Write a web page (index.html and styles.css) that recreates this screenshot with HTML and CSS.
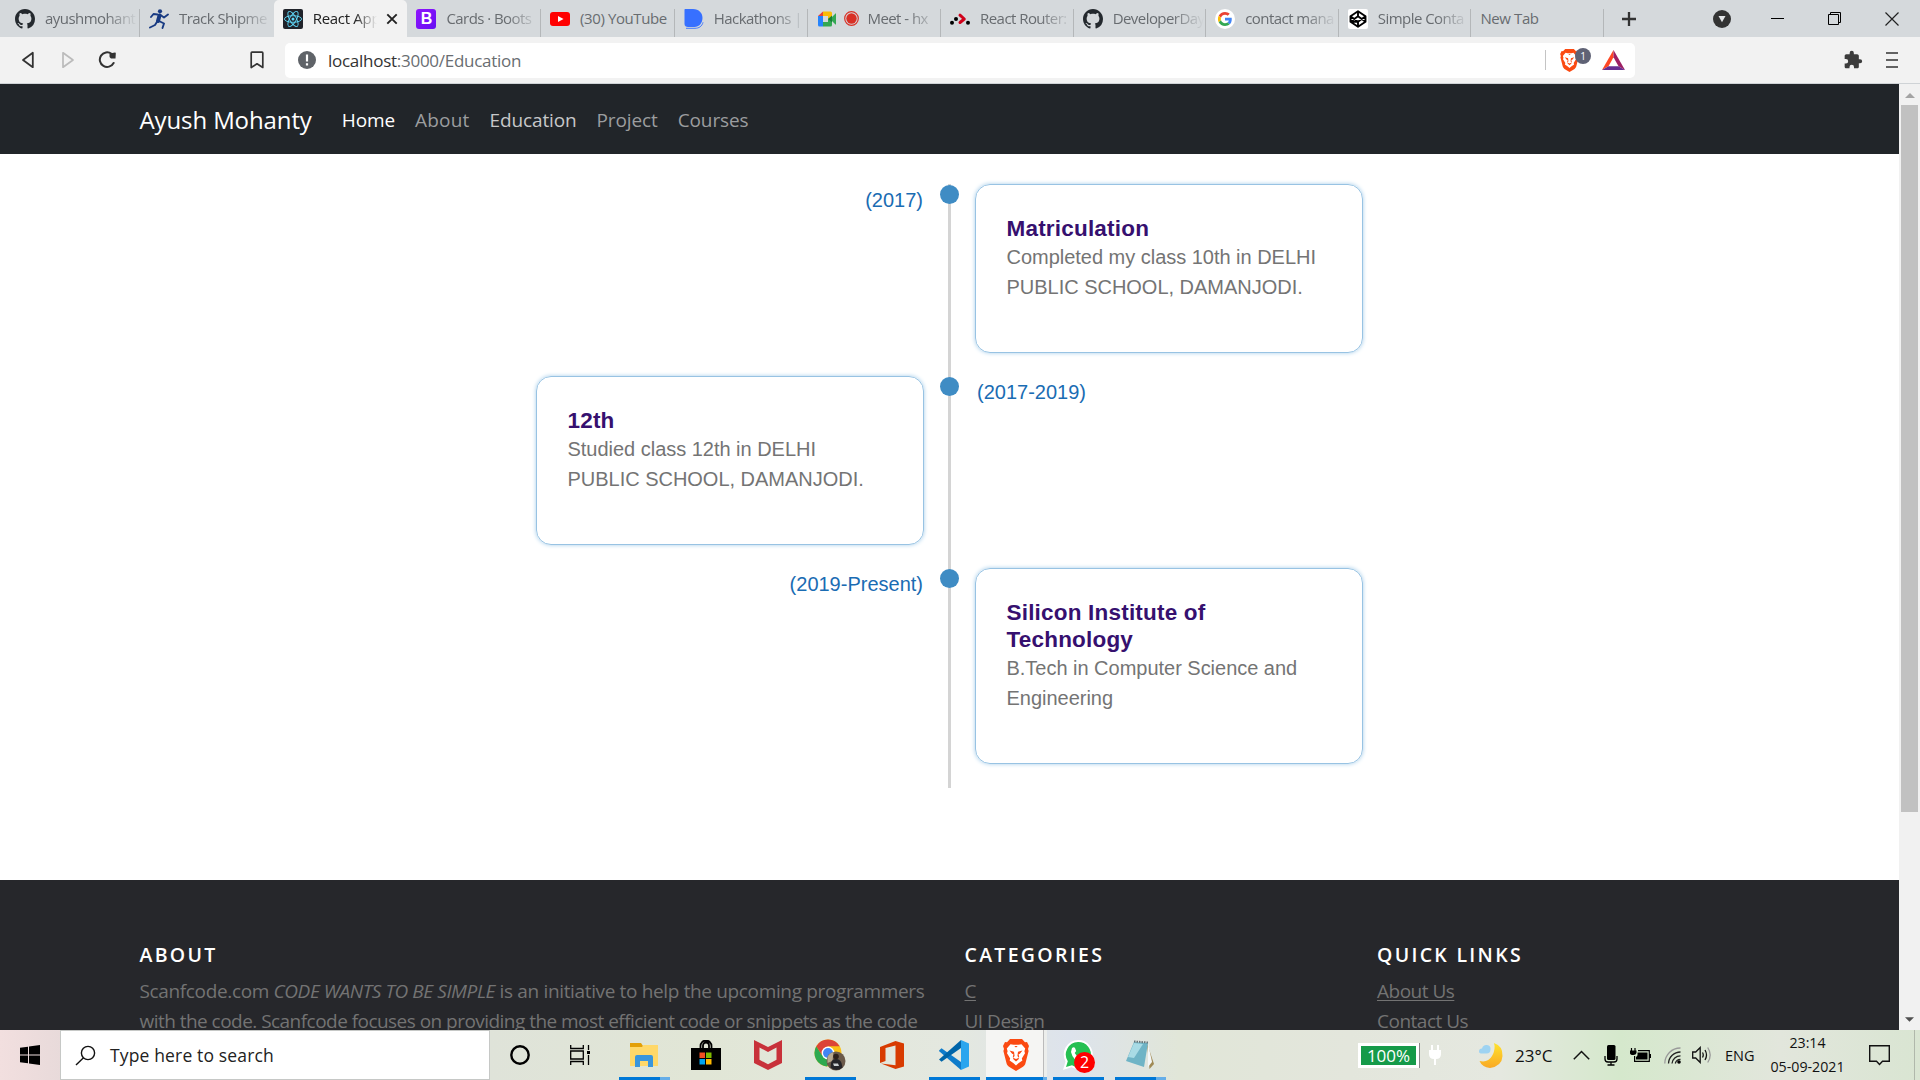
FILE: index.html
```html
<!DOCTYPE html>
<html lang="en">
<head>
<meta charset="utf-8">
<title>React App</title>
<link rel="stylesheet" href="styles.css">
</head>
<body>
<svg class="defs" width="0" height="0" aria-hidden="true">
  <symbol id="github" viewBox="0 0 16 16"><path fill="#24292e" d="M8 0C3.58 0 0 3.58 0 8c0 3.54 2.29 6.53 5.47 7.59.4.07.55-.17.55-.38 0-.19-.01-.82-.01-1.49-2.01.37-2.53-.49-2.69-.94-.09-.23-.48-.94-.82-1.13-.28-.15-.68-.52-.01-.53.63-.01 1.08.58 1.23.82.72 1.21 1.87.87 2.33.66.07-.52.28-.87.51-1.07-1.78-.2-3.64-.89-3.64-3.95 0-.87.31-1.59.82-2.15-.08-.2-.36-1.02.08-2.12 0 0 .67-.21 2.2.82.64-.18 1.32-.27 2-.27s1.36.09 2 .27c1.53-1.04 2.2-.82 2.2-.82.44 1.1.16 1.92.08 2.12.51.56.82 1.27.82 2.15 0 3.07-1.87 3.75-3.65 3.95.29.25.54.73.54 1.48 0 1.07-.01 1.93-.01 2.2 0 .21.15.46.55.38A8.01 8.01 0 0 0 16 8c0-4.42-3.58-8-8-8z"/></symbol>
  <symbol id="brave" viewBox="0 0 26 32"><path fill="#fb4a12" d="M7 0h12l3 3.200 2-.3 2 4-1 3 .6 2-3.200 12.600c-.4 1.500-1.200 2.400-2.400 3.200L13 32l-7-4.300c-1.200-.8-2-1.700-2.400-3.200L.4 11.900 1 9.900l-1-3 2-4 2 .3z"/><path fill="#fff" d="M7.500 5.200l3 .6h5l3-.6 3.700 4.400-.8 2.600.6 2-3.200 5.200.6 2-4 2.800L13 26.600l-2.400-2.400-4-2.800.6-2L4 14.200l.6-2-.8-2.600z"/><path fill="#fb4a12" d="M6.500 11.500l4.500 1.300.6 4.200-1.500 1.800L13 20l2.900-1.200-1.500-1.800.6-4.200 4.500-1.300-2.600 3.300-1.300.4.600 2.800-.6 2.200L13 22.500 10.400 20.200l-.6-2.200.6-2.800-1.300-.4zM11.300 7h3.400L13 8.500z"/></symbol>
</svg>

<header class="browser">
  <div class="tabs">
    <div class="tab"><svg class="fav"><use href="#github"/></svg><span class="name">ayushmohant</span></div>
    <div class="tab"><svg class="fav" viewBox="0 0 20 20"><circle cx="11" cy="2.300" r="2.100" fill="#183a82"/><path fill="none" stroke="#183a82" stroke-linecap="round" stroke-linejoin="round" d="M10.500 6.500L9 12" stroke-width="4"/><path fill="none" stroke="#183a82" stroke-width="1.900" stroke-linecap="round" stroke-linejoin="round" d="M8.500 5.500L4.500 5 2 8M11.500 6l3.500 2.500L19 5.500M10 12l5 2.500-1.500 4.500M8.500 12l-2.500 4L1 18.500"/></svg><span class="name">Track Shipme</span></div>
    <div class="tab active"><svg class="fav" viewBox="0 0 20 20"><rect width="20" height="20" rx="2" fill="#20232a"/><g fill="none" stroke="#61dafb" stroke-width=".9"><ellipse cx="10" cy="10" rx="8.600" ry="3.300"/><ellipse cx="10" cy="10" rx="8.600" ry="3.300" transform="rotate(60 10 10)"/><ellipse cx="10" cy="10" rx="8.600" ry="3.300" transform="rotate(120 10 10)"/></g><circle cx="10" cy="10" r="1.500" fill="#61dafb"/></svg><span class="name">React App</span><svg class="x" viewBox="0 0 12 12"><path d="M1.300 1.300l9.400 9.400M10.700 1.300L1.300 10.700" stroke="#222" stroke-width="1.900"/></svg></div>
    <div class="tab"><span class="fav boots">B</span><span class="name">Cards · Boots</span></div>
    <div class="tab full"><svg class="fav" viewBox="0 0 20 20"><rect y="3" width="20" height="14" rx="3" fill="#f00"/><path fill="#fff" d="M8 7l5.500 3L8 13z"/></svg><span class="name">(30) YouTube</span></div>
    <div class="tab"><svg class="fav" viewBox="0 0 20 20"><path fill="#3770ff" d="M1 0h8c6 0 9.500 4 9.500 9s-3.500 9-8 9H4c-2 0-3.500-1-3.500-3V.5z"/><path fill="none" stroke="#3770ff" stroke-width=".9" d="M2 19.300h9c4 0 7-2 8-6"/></svg><span class="name">Hackathons |</span></div>
    <div class="tab"><svg class="fav" viewBox="0 0 20 20"><path fill="#ea4335" d="M1 7l5-4.500V7z"/><path fill="#fbbc04" d="M6 2.500h7.500q1.500 0 1.500 1.500v4l-4 2.500V7H6z"/><path fill="#2684fc" d="M1 7h5v10.500H2.500Q1 17.500 1 16z"/><path fill="#34a853" d="M6 13h5v-3l4-2 3.500-3.500q.5-.5.5.500v10q0 1-.5.500L15 12v4q0 1.500-1.500 1.500H6z"/><path fill="#188038" d="M11 10l4-3.500v7z"/></svg><svg class="rec" viewBox="0 0 15 15"><circle cx="7.500" cy="7.500" r="6.800" fill="none" stroke="#d93025" stroke-width="1.200"/><circle cx="7.500" cy="7.500" r="5.200" fill="#d93025"/></svg><span class="name">Meet - hx</span></div>
    <div class="tab"><svg class="fav" viewBox="0 0 20 20"><path fill="none" stroke="#d0021b" stroke-width="3" stroke-linecap="round" stroke-linejoin="round" d="M10 6.200l4.300 3.800-4.300 3.500"/><circle cx="6" cy="10" r="2"/><circle cx="2" cy="13.700" r="2"/><circle cx="18" cy="13.700" r="2"/></svg><span class="name">React Router:</span></div>
    <div class="tab"><svg class="fav"><use href="#github"/></svg><span class="name">DeveloperDay</span></div>
    <div class="tab"><svg class="fav" viewBox="-10 -10 68 68"><circle cx="24" cy="24" r="34" fill="#fff"/><path fill="#EA4335" d="M24 9.500c3.540 0 6.710 1.220 9.210 3.600l6.850-6.850C35.900 2.380 30.470 0 24 0 14.620 0 6.510 5.380 2.560 13.220l7.980 6.190C12.430 13.720 17.740 9.500 24 9.500z"/><path fill="#4285F4" d="M46.980 24.550c0-1.570-.15-3.090-.38-4.550H24v9.020h12.940c-.58 2.960-2.260 5.480-4.780 7.180l7.730 6c4.510-4.180 7.090-10.360 7.090-17.650z"/><path fill="#FBBC05" d="M10.530 28.590c-.48-1.450-.76-2.990-.76-4.590s.27-3.140.76-4.590l-7.980-6.190C.92 16.460 0 20.120 0 24c0 3.880.92 7.540 2.560 10.780l7.970-6.190z"/><path fill="#34A853" d="M24 48c6.480 0 11.930-2.130 15.890-5.810l-7.730-6c-2.150 1.450-4.920 2.300-8.160 2.300-6.260 0-11.570-4.220-13.470-9.910l-7.980 6.190C6.510 42.620 14.620 48 24 48z"/></svg><span class="name">contact mana</span></div>
    <div class="tab"><svg class="fav" viewBox="0 0 20 20"><rect width="20" height="20" rx="2" fill="#fff"/><path fill="none" stroke="#000" stroke-width="1.900" stroke-linejoin="round" d="M10 2.300l7.500 4.900v5.600L10 17.700l-7.500-4.900V7.200zM10 2.300v5l7.500 5.500M10 17.700v-5L2.500 7.200M17.500 7.200L10 12.700l-7.500.1L10 7.300"/></svg><span class="name">Simple Conta</span></div>
    <div class="tab full"><span class="name">New Tab</span></div>
    <svg class="plus" viewBox="0 0 16 16"><path d="M8 1v14M1 8h14" stroke="#333" stroke-width="2.300"/></svg>
    <div class="winctl">
      <svg width="18" height="18" viewBox="0 0 18 18"><circle cx="9" cy="9" r="9" fill="#333"/><path fill="#e4e6e8" d="M5.500 6h7L9 12.300z"/></svg>
      <svg width="14" height="14" viewBox="0 0 14 14"><path d="M0 6.500h13" stroke="#000"/></svg>
      <svg width="14" height="14" viewBox="0 0 14 14"><path fill="none" stroke="#000" d="M.5 2.500h10v10H.5zM2.500 2.500v-2h10v10h-2"/></svg>
      <svg width="14" height="14" viewBox="0 0 14 14"><path d="M.5.5l13 13M13.500.5l-13 13" stroke="#222" stroke-width="1.200"/></svg>
    </div>
  </div>
  <div class="toolbar">
    <div class="navbtns">
      <svg width="14" height="18" viewBox="0 0 14 18"><path fill="none" stroke="#333" stroke-width="1.800" stroke-linejoin="round" d="M11.800 1.800v14.400L2 9z"/></svg>
      <svg width="14" height="18" viewBox="0 0 14 18"><path fill="none" stroke="#bbb" stroke-width="1.700" stroke-linejoin="round" d="M2 1.800v14.400L12 9z"/></svg>
      <svg class="reload" width="18" height="18" viewBox="0 0 18 18"><path fill="none" stroke="#333" stroke-width="2" stroke-linecap="round" d="M13.500 2.800A7.300 7.300 0 1 0 15.600 12"/><path fill="#333" d="M11.500 2.500L17 1.500q1 0 .8 1L17.500 7.500H13q-1.500-1-1.500-2z"/></svg>
      <svg class="bm" width="14" height="18" viewBox="0 0 14 18"><path fill="none" stroke="#333" stroke-width="1.700" stroke-linejoin="round" d="M2 1.200h10q.8 0 .8.800v14.500L7 12.800l-5.800 3.700V2q0-.8.800-.8z"/></svg>
    </div>
    <div class="url">
      <svg width="18" height="18" viewBox="0 0 18 18"><circle cx="9" cy="9" r="9" fill="#5f6368"/><path d="M9 3.500v7M9 12.200v2.200" stroke="#fff" stroke-width="2.200"/></svg>
      <span class="addr">localhost<span>:3000/Education</span></span>
      <div class="urlend">
        <span class="shield"><svg width="19" height="23"><use href="#brave"/></svg><b>1</b></span>
        <svg width="23" height="20" viewBox="0 0 23 20"><path fill="#ff4724" d="M11.500 0L0 20l6.500-3.800 5-9z"/><path fill="#9e1f63" d="M11.500 0v7.200l5 9L23 20z"/><path fill="#662d91" d="M0 20l6.500-3.800h10L23 20z"/></svg>
      </div>
    </div>
    <svg class="puzzle" width="20" height="20" viewBox="0 0 24 24"><path fill="#3c3c3c" d="M20.500 11H19V7c0-1.100-.9-2-2-2h-4V3.500a2.500 2.500 0 0 0-5 0V5H4c-1.100 0-2 .9-2 2v3.800h1.500a2.700 2.700 0 0 1 0 5.400H2V20c0 1.100.9 2 2 2h3.800v-1.500a2.700 2.700 0 0 1 5.400 0V22H17c1.100 0 2-.9 2-2v-4h1.500a2.500 2.500 0 0 0 0-5z"/></svg>
    <svg class="menu" width="12" height="18" viewBox="0 0 12 18"><path d="M0 2h12M0 9h12M0 16h12" stroke="#333" stroke-width="1.700"/></svg>
  </div>
</header>

<div class="viewport">
  <main class="page">
    <nav class="navbar">
      <a class="brand">Ayush Mohanty</a>
      <a class="link on">Home</a>
      <a class="link about-link">About</a>
      <a class="link hover">Education</a>
      <a class="link">Project</a>
      <a class="link">Courses</a>
    </nav>
    <section class="timeline">
      <div class="row">
        <div class="date left">(2017)</div><div class="axis"><i></i></div>
        <article class="card"><h3>Matriculation</h3><p>Completed my class 10th in DELHI<br>PUBLIC SCHOOL, DAMANJODI.</p></article>
      </div>
      <div class="row">
        <article class="card"><h3>12th</h3><p>Studied class 12th in DELHI<br>PUBLIC SCHOOL, DAMANJODI.</p></article>
        <div class="axis"><i></i></div><div class="date right">(2017-2019)</div>
      </div>
      <div class="row">
        <div class="date left">(2019-Present)</div><div class="axis"><i></i></div>
        <article class="card"><h3>Silicon Institute of<br>Technology</h3><p>B.Tech in Computer Science and<br>Engineering</p></article>
      </div>
    </section>
    <footer class="footer">
      <div class="about"><h6>ABOUT</h6><p>Scanfcode.com <em>CODE WANTS TO BE SIMPLE</em> is an initiative to help the upcoming programmers<br><span class="tight">with the code. Scanfcode focuses on providing the most efficient code or snippets as the code</span></p></div>
      <div class="cats"><h6>CATEGORIES</h6><a>C</a><a>UI Design</a></div>
      <div class="quick"><h6>QUICK LINKS</h6><a>About Us</a><a>Contact Us</a></div>
    </footer>
  </main>
  <div class="scroll">
    <svg width="10" height="5" viewBox="0 0 10 5"><path fill="#a3a3a3" d="M0 5l5-5 5 5z"/></svg>
    <div class="thumb"></div>
    <svg width="9" height="5" viewBox="0 0 10 5"><path fill="#505050" d="M0 0l5 5 5-5z"/></svg>
  </div>
</div>

<footer class="taskbar">
  <div class="start"><svg width="20" height="20" viewBox="0 0 20 20"><path d="M0 2.800l8-1.100v7.800H0zM9 1.500L20 0v9.500H9zM0 10.500h8v7.800l-8-1.100zM9 10.500h11V20L9 18.500z"/></svg></div>
  <div class="search"><svg width="21" height="21" viewBox="0 0 21 21"><circle cx="13" cy="8" r="6.600" fill="none" stroke="#111" stroke-width="1.400"/><path d="M8.500 12.800L1 20" stroke="#111" stroke-width="1.400"/></svg><span>Type here to search</span></div>
  <div class="apps">
    <div class="app"><svg width="20" height="20" viewBox="0 0 20 20"><circle cx="10" cy="10" r="8.700" fill="none" stroke="#000" stroke-width="2.400"/></svg></div>
    <div class="app tv"><svg width="21" height="20" viewBox="0 0 21 20"><path fill="none" stroke="#000" stroke-width="1.300" d="M.7 0v3.500h12.600V0M.7 6h12.600v8H.7zM.7 20v-3.500h12.600V20M18.500 0v5M18.500 10v10"/><path d="M17 6h3v3h-3z"/></svg></div>
    <div class="app run stack"><svg width="28" height="24" viewBox="0 0 28 24"><path fill="#e3a008" d="M0 0h11l2 3v3H0z"/><path fill="#ffd869" d="M0 4h12l1.500-2H28v21H0z"/><path fill="#3a96dd" d="M5 24V14q0-2 2-2h14q2 0 2 2v10h-5v-6h-8v6z"/></svg></div>
    <div class="app"><svg width="30" height="30" viewBox="0 0 30 30"><path d="M0 8h30v22H0z"/><path fill="none" stroke="#000" stroke-width="1.800" d="M9.500 9V6a5.500 5.500 0 0 1 11 0v3M12 9V5.500a3 3 0 0 1 6 0V9"/><path fill="#f25022" d="M8.500 12.500H14V18H8.500z"/><path fill="#7fba00" d="M15 12.500h5.500V18H15z"/><path fill="#00a4ef" d="M8.500 19H14v5.500H8.500z"/><path fill="#ffb900" d="M15 19h5.500v5.500H15z"/></svg></div>
    <div class="app"><svg width="28" height="30" viewBox="0 0 28 30"><path fill="#c8313a" d="M0 0l14 7L28 0v23l-14 7L0 23zM5.500 7.500v12.300L14 24.300l8.500-4.500V7.500L14 12z"/></svg></div>
    <div class="app run"><svg width="32" height="32" viewBox="0 0 32 32"><circle cx="14" cy="14" r="13.500" fill="#fbc116"/><path fill="#2da94f" d="M2.300 7.200A13.500 13.500 0 0 0 13 27.500L20 17l-12-1z"/><path fill="#dc4437" d="M2.300 7.200A13.500 13.500 0 0 1 25.700 7.200H14L8 16z"/><circle cx="14" cy="14" r="6.400" fill="#fff"/><circle cx="14" cy="14" r="5" fill="#4285f4"/><circle cx="22" cy="22" r="9.500" fill="#6b5a4a"/><path fill="#b8a88e" d="M13.500 18a9.500 9.500 0 0 1 6-5l-1 9-5 2z"/><path fill="#242428" d="M17 24q1-4 5-4t5.500 4l1 4.500q-6 5-12 0z"/><circle cx="22" cy="17.500" r="2.800" fill="#2f211b"/><path d="M19 24.500h5l1 2.500h-5z" fill="#c9ced0"/></svg></div>
    <div class="app"><svg width="24" height="28" viewBox="0 0 24 28"><path fill="#d83b01" d="M0 6L15.500 0 24 2.500v23L15.500 28 1 22.500l14.500 1.800V4.500L5.500 7v13L0 22z"/></svg></div>
    <div class="app run"><svg width="30" height="30" viewBox="0 0 30 30"><path fill="#0f7ccb" d="M0 10.500L2.500 8.300 22 22v8L.5 11.500z"/><path fill="#0065a9" d="M0 19.500L22 0v8L2.500 21.700z"/><path fill="#2aa5ee" d="M22 0l8 3.500v23L22 30z"/></svg></div>
    <div class="app current"><svg width="26" height="32"><use href="#brave"/></svg></div>
    <div class="app run wa"><svg width="30" height="30" viewBox="0 0 30 30"><path fill="#fff" d="M15 0a14.500 14.500 0 1 1-6.500 27.300L0 30l2.500-8.500A14.500 14.500 0 0 1 15 0z"/><path fill="#25c052" d="M15 2a12.500 12.500 0 1 1-6 23.200L3 27l1.800-5.800A12.500 12.500 0 0 1 15 2z"/><path fill="#fff" d="M9 8q2-1.500 3 0l1.200 3-1.500 2q1.800 3.500 5.300 4.800l2-2 3.500 1.700q0 4-4 4.500Q10 21 8 12z"/></svg><b class="badge">2</b></div>
    <div class="app run stack"><svg width="28" height="30" viewBox="0 0 28 30"><path fill="#a08a55" d="M21 3l7 21-4.500 5z"/><path fill="#f4f7f8" d="M22 3l4 19-4 5z"/><path fill="#6fb4c6" d="M8 2l14 1-4 24L0 21z"/><path fill="#a9dbe5" d="M8 3l9 1-9 14-6-1z"/><path d="M8 1.500l14 1" stroke="#67757a" stroke-width="2" stroke-dasharray="1.500 1"/></svg></div>
  </div>
  <div class="tray">
    <div class="power"><span class="pct">100%</span><svg width="12" height="20" viewBox="0 0 12 20"><path fill="#fff" d="M2 0h2v5h4V0h2v5h2v4q0 5-5 5v6H5v-6Q0 14 0 9V5h2z"/></svg></div>
    <svg class="moon" width="25" height="25" viewBox="0 0 25 25"><defs><linearGradient id="m" x2="0" y2="1"><stop stop-color="#ffe32e"/><stop offset="1" stop-color="#f9a825"/></linearGradient></defs><path fill="url(#m)" d="M16 0q9 3 8.500 13T12 25Q4 24 1.500 18 10 20 14 13T16 0z"/><path fill="#9ed3f2" d="M1 8.500q0-3 3-3 1-4 5-3.500 4 .5 3.500 4.500 0 4-4 4H4q-3 0-3-2z"/></svg>
    <span class="temp">23°C</span>
    <svg class="chev" width="17" height="10" viewBox="0 0 17 10"><path fill="none" stroke="#111" stroke-width="1.500" d="M.8 9.200L8.500 1.500l7.700 7.700"/></svg>
    <svg class="mic" width="14" height="21" viewBox="0 0 14 21"><rect x="3" width="8.500" height="15" rx="1.500"/><path fill="none" stroke="#000" stroke-width="1.300" d="M1 11v3q0 3 3 3h6q3 0 3-3v-3M7 17v3M3.500 20h7"/></svg>
    <svg class="bat" width="21" height="15" viewBox="0 0 21 15"><path d="M7.500 4.500h10v7H6V9q1.500-1 1.500-2z"/><path fill="none" stroke="#000" stroke-width="1.200" d="M8 2.600h11.300v10.800H4.600V8M20.500 6v4M1.500 0v3M5 0v3"/><path d="M0 2.500h6.500V5q-.5 2-3.200 2Q0 7 0 5z"/></svg>
    <svg class="wifi" width="17" height="17" viewBox="0 0 17 17"><g fill="none" stroke-width="1.300"><path stroke="#999" d="M.8 16.500A15.500 15.500 0 0 1 16.500 1"/><path stroke="#222" d="M4.500 16.500a12 12 0 0 1 12-11.500M8 16.500a8.500 8.500 0 0 1 8.500-7.700M11.300 16.500a5.300 5.300 0 0 1 5.200-4.200"/></g><circle cx="15" cy="15" r="1.800"/></svg>
    <svg class="vol" width="20" height="18" viewBox="0 0 20 18"><path fill="none" stroke="#111" stroke-width="1.300" d="M.7 6h3l4.500-4.500v15L3.700 12h-3zM10.500 6.500q1.500 2.500 0 5M13 4q3 5 0 10"/><path fill="none" stroke="#999" stroke-width="1.300" d="M15.700 1.500q5 7.500 0 15"/></svg>
    <span class="lang">ENG</span>
    <div class="clock"><span>23:14</span><span>05-09-2021</span></div>
    <svg class="note" width="21" height="21" viewBox="0 0 21 21"><path fill="none" stroke="#111" stroke-width="1.400" d="M.7.7h19.600v15.600H13.500L10.500 19.500 7.500 16.300H.7z"/></svg>
    <i class="peek"></i>
  </div>
</footer>
</body>
</html>
```
FILE: styles.css
```css
* { box-sizing: border-box; }
body {
  margin: 0;
  width: 1920px;
  height: 1080px;
  overflow: hidden;
  display: flex;
  flex-direction: column;
  font-family: "Open Sans", "Noto Sans", sans-serif;
  background: #fff;
}
svg { display: block; flex: none; }
.defs { position: absolute; }

/* Browser chrome */
.browser { flex: none; height: 84px; background: #f2f2f2; border-bottom: 1px solid #cfd3d6; }
.tabs {
  height: 37px;
  padding-left: 6px;
  background: #d5d9dc;
  display: grid;
  grid-template-columns: 134px repeat(5, 133.7px) repeat(6, 132.6px) 49px 1fr;
  align-items: stretch;
}
.tab {
  display: flex;
  align-items: center;
  min-width: 0;
  padding: 0 2px 0 9px;
  font-size: 15px;
  letter-spacing: -0.55px;
  color: #686c70;
  background: linear-gradient(#b4b7b9, #b4b7b9) right bottom / 1px 28px no-repeat;
}
.tab:nth-child(2) { background: none; }
.tab.active { background: #f2f2f2; border-radius: 5px 5px 0 0; color: #222; }
.fav { width: 20px; height: 20px; flex: none; margin-right: 10px; }
.boots {
  border-radius: 3px;
  background: linear-gradient(135deg, #9013fe, #6610f2);
  color: #fff;
  font: bold 16px/20px "Liberation Sans", sans-serif;
  text-align: center;
}
.rec { width: 15px; height: 15px; margin: 0 8px 0 -3px; }
.name {
  flex: 1;
  min-width: 0;
  margin-top: -1px;
  white-space: nowrap;
  -webkit-mask-image: linear-gradient(90deg, #000 calc(100% - 32px), transparent);
  mask-image: linear-gradient(90deg, #000 calc(100% - 32px), transparent);
}
.tab.full { letter-spacing: -0.4px; }
.tab.full .name { -webkit-mask-image: none; mask-image: none; }
.tab.active { letter-spacing: -0.3px; }
.tab.active .name {
  -webkit-mask-image: linear-gradient(90deg, #000 calc(100% - 22px), transparent);
  mask-image: linear-gradient(90deg, #000 calc(100% - 22px), transparent);
}
.x { width: 12px; height: 12px; margin: 0 7px 0 9px; }
.plus { width: 16px; height: 16px; align-self: center; justify-self: center; }
.winctl { display: flex; align-items: center; gap: 43px; padding-left: 60px; }
.winctl svg:first-child { margin-right: -3px; }

.toolbar { height: 46px; display: flex; align-items: center; }
.navbtns { width: 285px; display: flex; align-items: center; padding-left: 21px; gap: 26px; }
.reload { margin-left: -3px; }
.bm { margin-left: 108px; }
.url {
  width: 1350px;
  height: 35px;
  padding: 0 10px 0 13px;
  display: flex;
  align-items: center;
  gap: 12px;
  border-radius: 5px;
  background: #fff;
}
.addr { font-size: 17px; letter-spacing: -0.27px; color: #333; }
.addr span { color: #696d71; }
.urlend {
  margin-left: auto;
  height: 20px;
  display: flex;
  align-items: center;
  gap: 23px;
  padding-left: 14px;
  border-left: 1px solid #c4c4c4;
}
.shield { position: relative; }
.shield b {
  position: absolute;
  left: 15px;
  top: -1px;
  width: 16px;
  height: 16px;
  border-radius: 8px;
  background: #5f6275;
  color: #fff;
  font: 10px/16px "Open Sans", sans-serif;
  text-align: center;
}
.puzzle { margin-left: 208px; }
.menu { margin-left: 23px; }

/* Web page */
.viewport { flex: none; height: 946px; display: flex; overflow: hidden; }
.page { width: 1899px; height: 946px; overflow: hidden; }
.navbar {
  height: 70px;
  padding: 1px 139.500px 0;
  display: flex;
  align-items: center;
  gap: 20px;
  background: #212529;
}
.brand { font-size: 24px; letter-spacing: -0.11px; color: #fff; margin-right: 10px; }
.link { font-size: 19px; letter-spacing: -0.12px; color: #9b9d9f; }
.link.about-link { letter-spacing: 0.2px; }
.link.on { color: #fff; }
.link.hover { color: #c7c8c9; }

.timeline {
  height: 726px;
  padding: 30px 536px 0;
  font-family: "Liberation Sans", Arial, sans-serif;
  font-size: 20px;
}
.row { display: grid; grid-template-columns: 388px 51px 388px; min-height: 192px; }
.row:last-child { min-height: 220px; }
.card {
  align-self: start;
  padding: 29.500px 30px 50.500px 30.500px;
  border: 1px solid #98c3e3;
  border-radius: 15px;
  box-shadow: 0 0 4px #a5cdea;
}
.card h3 { margin: 0; font-size: 22.500px; line-height: 27px; letter-spacing: 0.2px; color: #36106f; }
.card p { margin: 0; line-height: 30px; letter-spacing: -0.02px; color: #747474; }
.axis {
  padding-top: 1px;
  background: linear-gradient(#d4d4d4, #d4d4d4) center / 3px 100% no-repeat;
}
.axis i { display: block; width: 19px; height: 19px; margin: 0 auto; border-radius: 50%; background: #3f8cc4; }
.date { padding-top: 1px; line-height: 30px; color: #1a6cb3; }
.date.left { text-align: right; padding-right: 1px; }
.date.right { padding-left: 2px; }

.footer {
  height: 200px;
  padding: 60px 139.500px 0;
  display: grid;
  grid-template-columns: 825px 412.500px 1fr;
  background: #26272b;
  color: #737373;
  font-size: 19px;
  line-height: 30px;
  letter-spacing: -0.5px;
  white-space: nowrap;
}
.footer h6 { margin: 0 0 6px; font-size: 19.500px; line-height: 30px; font-weight: 600; letter-spacing: 2.300px; color: #fff; }
.footer p { margin: 0; letter-spacing: -0.35px; }
.footer em { letter-spacing: -0.42px; }
.footer .tight { letter-spacing: -0.535px; }
.cats, .quick { display: flex; flex-direction: column; align-items: flex-start; }
.footer a { text-decoration: underline; text-decoration-thickness: 1px; text-underline-offset: 2px; }

.scroll { width: 21px; display: flex; flex-direction: column; align-items: center; padding: 9px 0 8px; background: #f1f1f1; }
.thumb { width: 17px; height: 707px; margin: 7px 0 auto; background: #c1c1c1; }

/* Taskbar */
.taskbar {
  flex: none;
  height: 50px;
  display: flex;
  background: linear-gradient(90deg, #f2dfdf 0, #e8dada 61px, #dfe3d9 490px, #e1e6d6 700px, #e4e8e0 960px, #dde3ec 1070px, #e1e6d8 1180px, #e3e6dc 1350px, #e5e8e0 1500px, #d5e8cc 1620px, #e2e6dc 1780px, #d9e5d2 1920px);
  color: #111;
}
.start { width: 60px; display: flex; align-items: center; justify-content: center; }
.search {
  width: 430px;
  padding-left: 14px;
  display: flex;
  align-items: center;
  gap: 14px;
  border: 1px solid #c6c8c6;
  background: #fff;
  font-size: 17.500px;
  letter-spacing: 0.15px;
  color: #222;
}
.apps { display: flex; margin-left: -1px; }
.app { position: relative; width: 62px; display: flex; align-items: center; justify-content: center; }
.app.tv svg { margin-right: 4px; }
.app.run { background: linear-gradient(#0078d7, #0078d7) 6px 100% / 51px 3px no-repeat; }
.app.stack { background: linear-gradient(90deg, #0078d7 41px, #66aee8 41px) 6px 100% / 51px 3px no-repeat; }
.app.current {
  background: linear-gradient(90deg, #0078d7 57px, #66aee8 57px) 1px 100% / 61px 3px no-repeat, linear-gradient(90deg, #f5f5f3 57px, #bbb 57px, #bbb 58px, #eceeec 58px) 1px 0 / 61px 50px no-repeat;
}
.badge {
  position: absolute;
  left: 27px;
  top: 22px;
  width: 21px;
  height: 21px;
  border-radius: 50%;
  background: #f00;
  color: #fff;
  font: 16px/21px "Open Sans", sans-serif;
  text-align: center;
}
.tray { flex: 1; display: flex; align-items: center; padding-left: 187px; }
.power { display: flex; align-items: center; gap: 10px; width: 120px; }
.pct {
  width: 61px;
  height: 25px;
  border: 3px solid #fff;
  background: #159a49;
  box-shadow: 1px 0 0 #888;
  color: #fff;
  font-size: 17px;
  line-height: 19px;
  text-align: center;
}
.temp { width: 58px; margin-left: 12px; font-size: 17px; }
.chev { margin-right: 14px; }
.mic { margin-right: 12px; }
.bat { margin-right: 13px; }
.wifi { margin-right: 11px; }
.vol { margin-right: 13px; }
.lang { width: 45px; font-size: 14.500px; }
.clock { width: 75px; margin-right: 24px; display: flex; flex-direction: column; align-items: center; font-size: 14.200px; line-height: 24px; }
.peek { margin-left: auto; margin-right: 5px; width: 1px; height: 50px; background: #b0b8ab; }
```
